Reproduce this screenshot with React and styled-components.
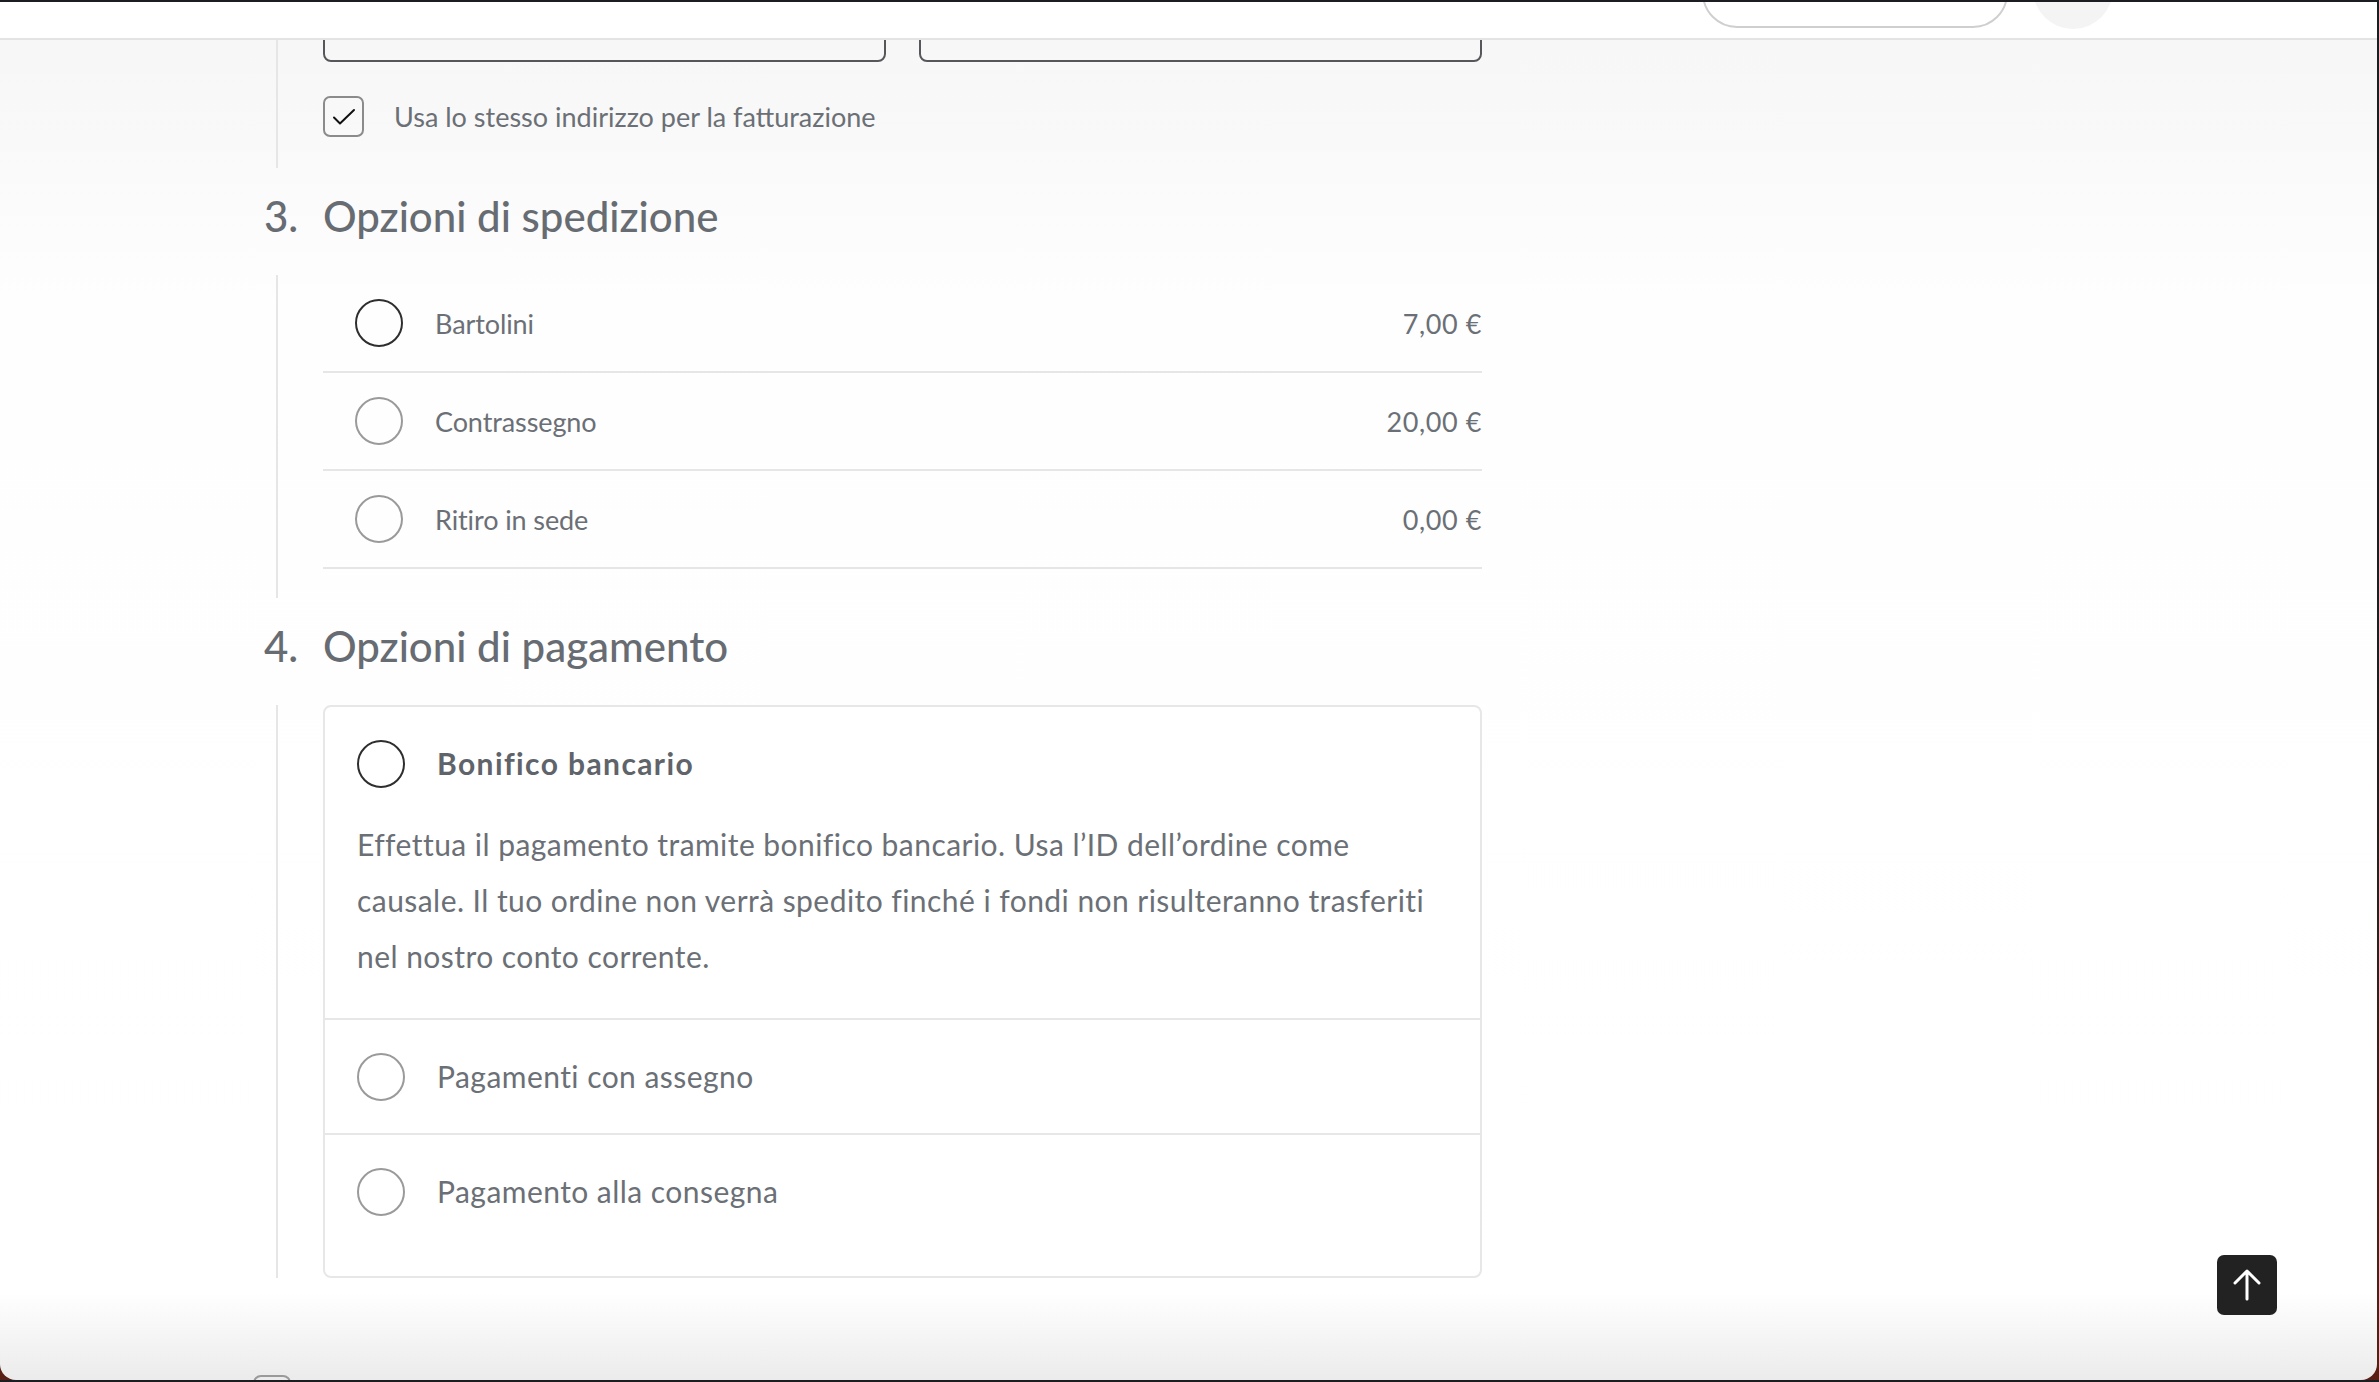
import React from "react";
import styled, { createGlobalStyle } from "styled-components";

const GlobalStyle = createGlobalStyle`
	html, body {
		margin: 0;
		padding: 0;
	}
	body {
		background: linear-gradient(to bottom, #1c1d20 0%, #231d1d 55%, #5a1f14 100%);
		font-family: "Lato", "Noto Sans", sans-serif;
		color: #6b6f76;
		overflow: hidden;
	}
	* {
		box-sizing: border-box;
	}
`;

const shipping = [
	{ id: "bartolini", label: "Bartolini", price: "7,00 €", active: true },
	{ id: "contrassegno", label: "Contrassegno", price: "20,00 €" },
	{ id: "ritiro", label: "Ritiro in sede", price: "0,00 €" },
];

const payments = [
	{ id: "bacs", label: "Pagamenti con assegno" },
	{ id: "cod", label: "Pagamento alla consegna" },
];

const App = () => {
	return (
		<>
			<GlobalStyle />
			<Window>
				<Header>
					<PillButton />
					<Avatar />
				</Header>
				<Main>
					<Column>
						<StepBody $bottom={31}>
							<FieldRow>
								<Field />
								<Field />
							</FieldRow>
							<CheckRow>
								<CheckBox>
									<svg width="24" height="18" viewBox="0 0 24 18" fill="none">
										<path d="M2 9.5 L8 15.5 L22 2" stroke="#111" strokeWidth="2" strokeLinecap="round" strokeLinejoin="round" />
									</svg>
								</CheckBox>
								<CheckLabel>Usa lo stesso indirizzo per la fatturazione</CheckLabel>
							</CheckRow>
						</StepBody>

						<StepTitle>
							<StepNum>3.</StepNum>
							Opzioni di spedizione
						</StepTitle>
						<StepBody $bottom={29}>
							<ShipList>
								{shipping.map((s) => (
									<ShipRow key={s.id}>
										<Radio $active={s.active} />
										<ShipLabel>{s.label}</ShipLabel>
										<Price>{s.price}</Price>
									</ShipRow>
								))}
							</ShipList>
						</StepBody>

						<StepTitle>
							<StepNum>4.</StepNum>
							Opzioni di pagamento
						</StepTitle>
						<StepBody $bottom={0}>
							<PayBox>
								<PayItem>
									<PayHead>
										<Radio $active />
										<PayLabel $bold>Bonifico bancario</PayLabel>
									</PayHead>
									<PayText>
										Effettua il pagamento tramite bonifico bancario. Usa l’ID dell’ordine come
										<br />
										causale. Il tuo ordine non verrà spedito finché i fondi non risulteranno trasferiti
										<br />
										nel nostro conto corrente.
									</PayText>
								</PayItem>
								{payments.map((p) => (
									<PayItem key={p.id}>
										<PayHead>
											<Radio />
											<PayLabel>{p.label}</PayLabel>
										</PayHead>
									</PayItem>
								))}
							</PayBox>
						</StepBody>

						<TermsRow>
							<TermsBox />
						</TermsRow>
					</Column>
				</Main>
				<ScrollTop>
					<svg width="30" height="34" viewBox="0 0 30 34" fill="none">
						<path d="M15 3 V31 M3 15 L15 3 L27 15" stroke="#fff" strokeWidth="3" strokeLinecap="round" strokeLinejoin="round" />
					</svg>
				</ScrollTop>
			</Window>
		</>
	);
};

const Window = styled.div`
	position: relative;
	margin-top: 2px;
	width: 2377px;
	height: 1378px;
	border-radius: 0 0 16px 16px;
	overflow: hidden;
	display: flex;
	flex-direction: column;
	background: linear-gradient(
		to bottom,
		#f6f6f6 0px,
		#f9f9f9 140px,
		#fefefe 300px,
		#ffffff 1290px,
		#ebebeb 1378px
	);
`;

const Header = styled.header`
	flex: none;
	height: 38px;
	background: #fff;
	border-bottom: 2px solid #e3e3e3;
	display: flex;
	justify-content: flex-end;
	align-items: flex-end;
	gap: 25px;
	padding: 0 264px 10px;
	overflow: hidden;
`;

const PillButton = styled.div`
	width: 306px;
	height: 70px;
	flex: none;
	border: 2px solid #cfcfcf;
	border-radius: 36px;
	background: #fff;
`;

const Avatar = styled.div`
	width: 80px;
	height: 80px;
	flex: none;
	border-radius: 50%;
	background: #f4f4f4;
	margin-bottom: -1px;
`;

const Main = styled.main`
	flex: 1;
	overflow: hidden;
	padding-left: 264px;
`;

const Column = styled.div`
	width: 1218px;
	display: flex;
	flex-direction: column;
`;

const StepBody = styled.div`
	display: flex;
	flex-direction: column;
	margin-left: 12px;
	border-left: 2px solid #e6e6e6;
	padding-left: 45px;
	padding-bottom: ${(p) => p.$bottom}px;
`;

const FieldRow = styled.div`
	display: grid;
	grid-template-columns: 1fr 1fr;
	gap: 33px;
	margin-top: -48px;
`;

const Field = styled.div`
	height: 70px;
	border: 2px solid #55575b;
	border-radius: 8px;
`;

const CheckRow = styled.label`
	display: flex;
	align-items: center;
	gap: 30px;
	margin-top: 34px;
`;

const CheckBox = styled.span`
	width: 41px;
	height: 41px;
	flex: none;
	border: 2px solid #8b8b8b;
	border-radius: 7px;
	display: flex;
	align-items: center;
	justify-content: center;
`;

const CheckLabel = styled.span`
	font-size: 27px;
	color: #6b6f76;
`;

const StepTitle = styled.h2`
	display: flex;
	align-items: baseline;
	margin: 0;
	padding: 21px 0 31px;
	font-size: 42px;
	line-height: 55px;
	font-weight: 500;
	color: #676b72;
`;

const StepNum = styled.span`
	width: 59px;
	flex: none;
`;

const ShipList = styled.div`
	display: flex;
	flex-direction: column;
`;

const ShipRow = styled.div`
	display: flex;
	align-items: center;
	gap: 32px;
	height: 98px;
	padding-left: 32px;
	border-bottom: 2px solid #e6e6e6;
	font-size: 27px;
	letter-spacing: -0.1px;
`;

const Radio = styled.span`
	width: 48px;
	height: 48px;
	flex: none;
	border-radius: 50%;
	border: 2px solid ${(p) => (p.$active ? "#2e2e2e" : "#9a9a9a")};
`;

const ShipLabel = styled.span`
	flex: 1;
`;

const Price = styled.span`
	text-align: right;
	letter-spacing: 0.6px;
`;

const PayBox = styled.div`
	border: 2px solid #e7e7e7;
	border-radius: 8px;
	background: #fff;
	display: flex;
	flex-direction: column;
`;

const PayItem = styled.div`
	padding: 33px 32px 32px;
	& + & {
		border-top: 2px solid #e7e7e7;
	}
	&:last-child {
		padding-bottom: 60px;
	}
`;

const PayHead = styled.div`
	display: flex;
	align-items: center;
	gap: 32px;
`;

const PayLabel = styled.span`
	font-size: 30px;
	line-height: 40px;
	letter-spacing: ${(p) => (p.$bold ? "1.4px" : "0.45px")};
	font-weight: ${(p) => (p.$bold ? 700 : 400)};
	color: ${(p) => (p.$bold ? "#5f636a" : "#6b6f76")};
	margin-top: ${(p) => (p.$bold ? "-3px" : "-3px")};
`;

const PayText = styled.p`
	margin: 28px 0 2px;
	font-size: 30px;
	line-height: 56px;
	letter-spacing: 0.45px;
	white-space: nowrap;
`;

const TermsRow = styled.div`
	margin-top: 97px;
	display: flex;
`;

const TermsBox = styled.span`
	width: 38px;
	height: 38px;
	margin-left: -11px;
	border: 2px solid #9a9a9a;
	border-radius: 8px;
`;

const ScrollTop = styled.button`
	position: absolute;
	right: 100px;
	bottom: 65px;
	width: 60px;
	height: 60px;
	border: none;
	border-radius: 7px;
	background: #222;
	display: flex;
	align-items: center;
	justify-content: center;
	padding: 0;
	cursor: pointer;
`;

export default App;
